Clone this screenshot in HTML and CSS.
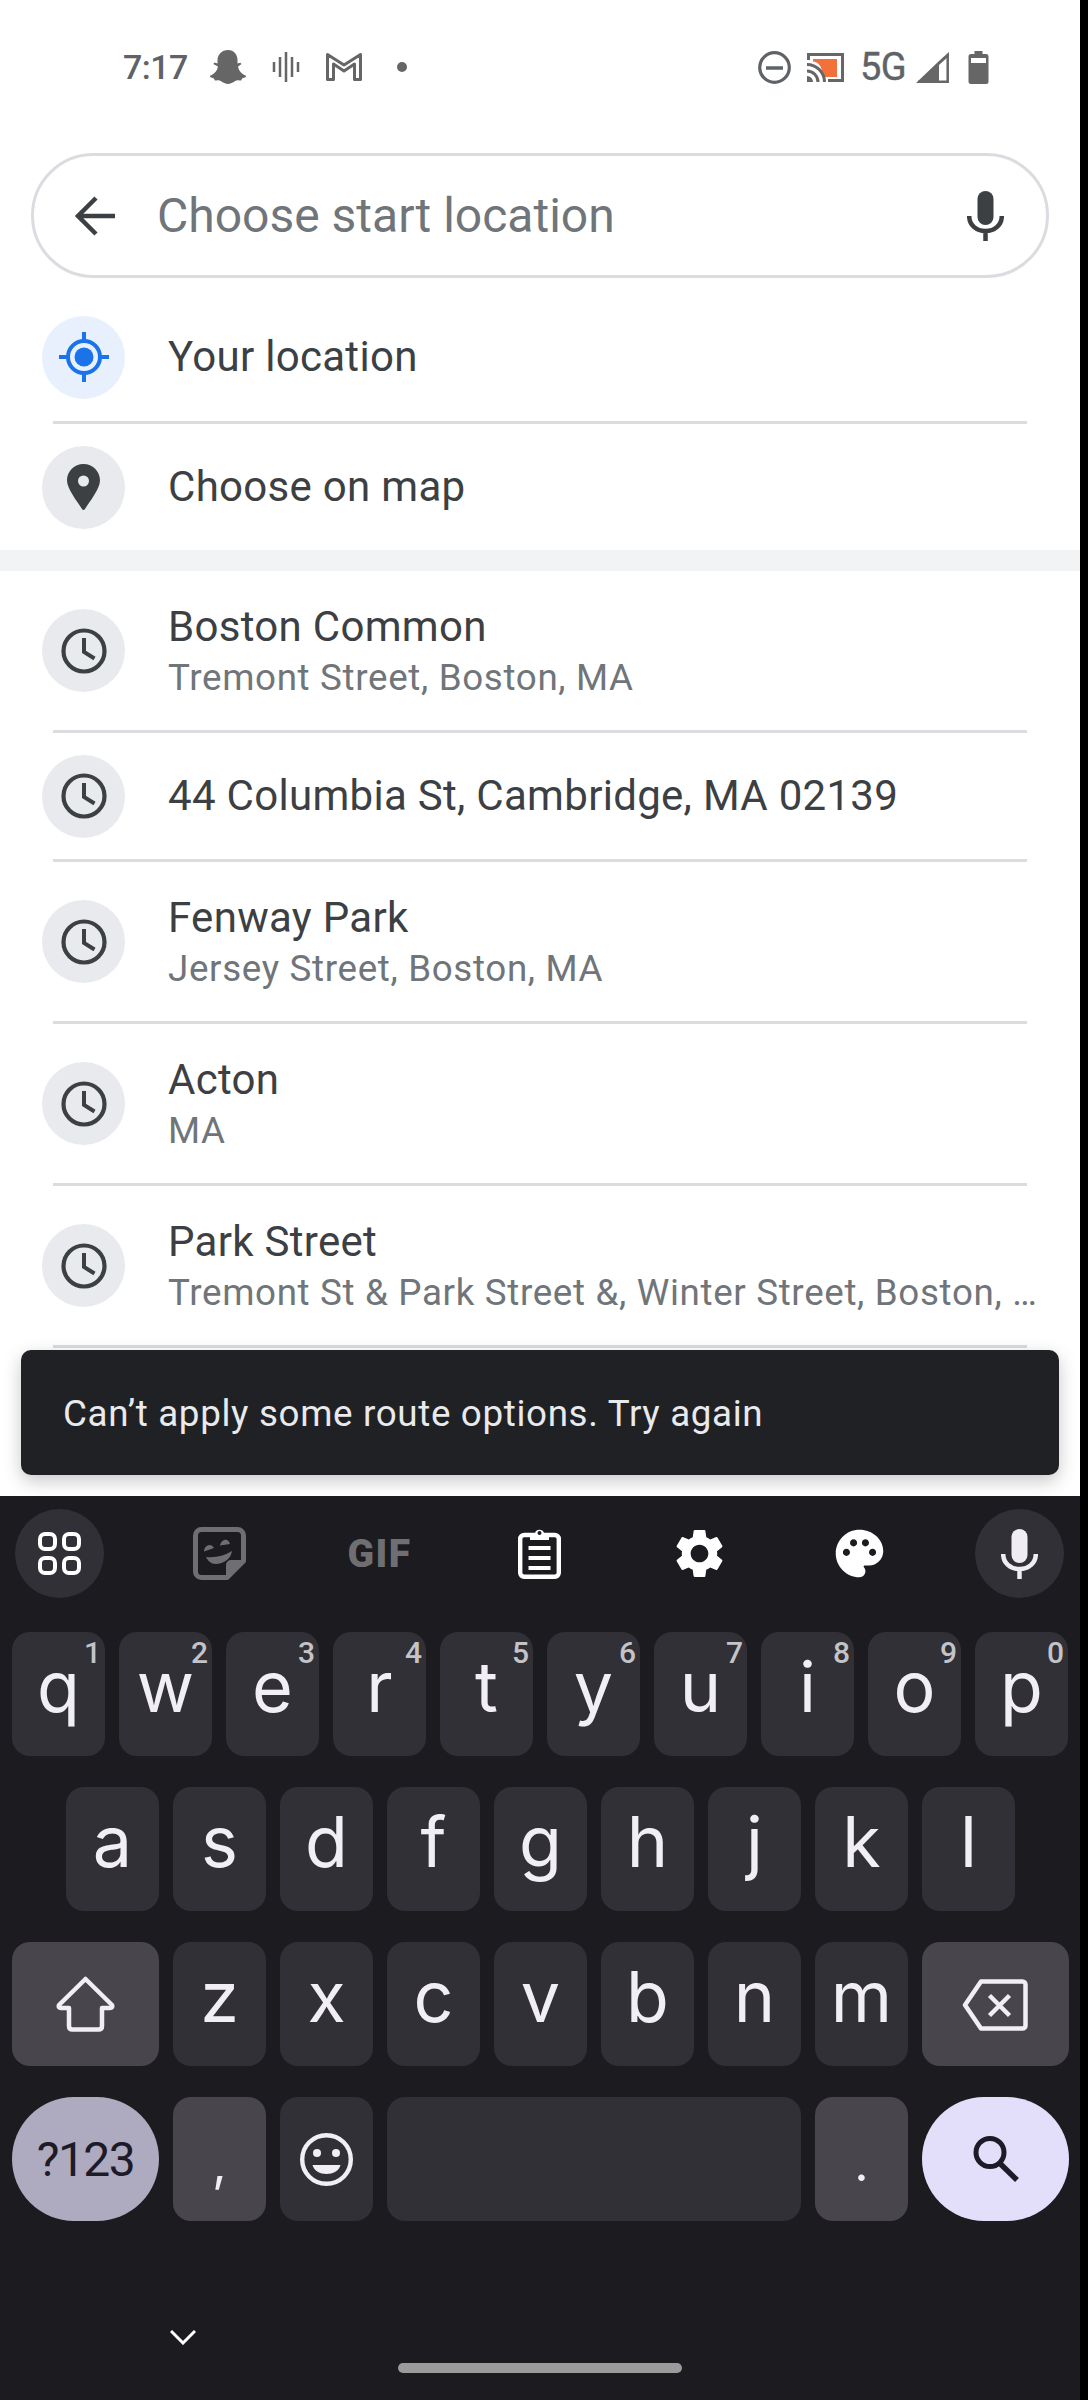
FILE: index.html
```html
<!DOCTYPE html>
<html lang="en">
<head>
    <meta charset="UTF-8">
    <meta name="viewport" content="width=device-width, initial-scale=1.0">
    <title>Choose start location</title>
    <link rel="stylesheet" href="styles.css">
</head>
<body>
<div class="screen">
    <div class="status">
        <div class="status-left">
            <span class="time">7:17</span>
            <svg class="ic-ghost" width="36" height="34" viewBox="0 0 36 34"><path fill="#666" d="M18 0c6 0 9.500 4.600 9.500 10v3.500l2.800-.8 1.200 1.400-3.400 2.400c.6 4 3.400 7.600 7.600 9.100l.3 1.400-4 1.400-.8 2.200-4-.3c-2.400.4-4.800 3.600-9.200 3.600s-6.800-3.200-9.200-3.600l-4 .3-.8-2.200-4-1.400.3-1.400c4.200-1.500 7-5.100 7.600-9.100L3.300 14l1.200-1.400 3 .8V10C7.500 4.600 12 0 18 0z"/></svg>
            <svg class="ic-wave" width="28" height="30" viewBox="0 0 28 30"><path stroke="#666" stroke-width="2.500" d="M2 10v10M8 5v20M14 0v30M20 5v20M26 10v10"/></svg>
            <svg class="ic-gmail" width="36" height="28" viewBox="0 0 36 28"><path fill="none" stroke="#666" stroke-width="3" stroke-linejoin="round" d="M1.500 26.500V1.500L18 12 34.500 1.500v25h-6V11L18 18 7.500 11v15.500z"/></svg>
            <span class="status-dot"></span>
        </div>
        <div class="status-right">
            <svg width="33" height="33" viewBox="0 0 33 33"><circle cx="16.500" cy="16.500" r="14.800" fill="none" stroke="#5f6368" stroke-width="3.200"/><path stroke="#5f6368" stroke-width="3.500" d="M8 17h17"/></svg>
            <svg class="ic-cast" width="37" height="29" viewBox="0 0 37 29"><path fill="#f4703a" d="M6 6h24v18H15.500C15.500 15 13 9.500 6 8.500z"/><path fill="none" stroke="#666" stroke-width="3" d="M1.500 7V1.500h34v26H21"/><path fill="none" stroke="#666" stroke-width="3" d="M0 11.500A17.500 17.500 0 0 1 17.500 29M0 18a11 11 0 0 1 11 11"/><path fill="#666" d="M0 23a6 6 0 0 1 6 6H0z"/></svg>
            <span class="network">5G</span>
            <svg class="ic-signal" width="33" height="31" viewBox="0 0 33 31"><path fill="#666" d="M0 31 23 9v22z"/><path fill="none" stroke="#666" stroke-width="2.500" d="M31.700 3v26.700H2"/><path fill="#666" d="M33 0v4l-10 9V9z"/></svg>
            <svg class="ic-battery" width="21" height="33" viewBox="0 0 21 33"><path fill="#666" d="M6.500 0h8v3h3.500a2.500 2.500 0 0 1 2.500 2.500V30.500a2.500 2.500 0 0 1-2.500 2.500H3a2.500 2.500 0 0 1-2.500-2.500V5.500A2.500 2.500 0 0 1 3 3h3.500z"/><rect x="3" y="7" width="15" height="5" fill="#fff"/></svg>
        </div>
    </div>

    <div class="search">
        <svg class="ic-back" width="42" height="42" viewBox="0 0 42 42"><path fill="none" stroke="#3c4043" stroke-width="4.500" d="M42 21H5M23 3 5 21l18 18"/></svg>
        <span class="search-text">Choose start location</span>
        <svg class="ic-mic" width="37" height="50" viewBox="0 0 37 50"><rect x="10.500" width="16" height="34" rx="8" fill="#3c4043"/><path fill="none" stroke="#3c4043" stroke-width="4.500" d="M2.200 25c0 9 7 15 16.300 15s16.300-6 16.300-15M18.500 39v11"/></svg>
    </div>

    <div class="list list-top">
        <div class="row row-short">
            <div class="badge badge-blue">
                <svg width="50" height="50" viewBox="0 0 50 50"><circle cx="25" cy="25" r="16" fill="none" stroke="#1a73e8" stroke-width="4"/><circle cx="25" cy="25" r="9.500" fill="#1a73e8"/><path stroke="#1a73e8" stroke-width="4" d="M25 0v9M25 41v9M0 25h9M41 25h9"/></svg>
            </div>
            <div class="row-text"><div class="title">Your location</div></div>
        </div>
        <div class="divider"></div>
        <div class="row row-short">
            <div class="badge">
                <svg width="33" height="46" viewBox="0 0 33 46"><path fill="#3c4043" fill-rule="evenodd" d="M16.500 0C7.400 0 0 7.300 0 16.300 0 25 10 37 15 45c.8 1.300 2.200 1.300 3 0 5-8 15-20 15-28.700C33 7.300 25.600 0 16.500 0zm0 11.500a5.500 5.500 0 1 1 0 11 5.500 5.500 0 0 1 0-11z"/></svg>
            </div>
            <div class="row-text"><div class="title">Choose on map</div></div>
        </div>
    </div>

    <div class="band"></div>

    <div class="list">
        <div class="row">
            <div class="badge"><svg class="ic-clock" width="46" height="46" viewBox="0 0 46 46"><circle cx="23" cy="23" r="20.500" fill="none" stroke="#3c4043" stroke-width="4.200"/><path fill="none" stroke="#3c4043" stroke-width="4" d="M23 10v14l10.500 6.500"/></svg></div>
            <div class="row-text"><div class="title">Boston Common</div><div class="sub">Tremont Street, Boston, MA</div></div>
        </div>
        <div class="divider"></div>
        <div class="row row-short">
            <div class="badge"><svg class="ic-clock" width="46" height="46" viewBox="0 0 46 46"><circle cx="23" cy="23" r="20.500" fill="none" stroke="#3c4043" stroke-width="4.200"/><path fill="none" stroke="#3c4043" stroke-width="4" d="M23 10v14l10.500 6.500"/></svg></div>
            <div class="row-text"><div class="title">44 Columbia St, Cambridge, MA 02139</div></div>
        </div>
        <div class="divider"></div>
        <div class="row">
            <div class="badge"><svg class="ic-clock" width="46" height="46" viewBox="0 0 46 46"><circle cx="23" cy="23" r="20.500" fill="none" stroke="#3c4043" stroke-width="4.200"/><path fill="none" stroke="#3c4043" stroke-width="4" d="M23 10v14l10.500 6.500"/></svg></div>
            <div class="row-text"><div class="title">Fenway Park</div><div class="sub">Jersey Street, Boston, MA</div></div>
        </div>
        <div class="divider"></div>
        <div class="row">
            <div class="badge"><svg class="ic-clock" width="46" height="46" viewBox="0 0 46 46"><circle cx="23" cy="23" r="20.500" fill="none" stroke="#3c4043" stroke-width="4.200"/><path fill="none" stroke="#3c4043" stroke-width="4" d="M23 10v14l10.500 6.500"/></svg></div>
            <div class="row-text"><div class="title">Acton</div><div class="sub">MA</div></div>
        </div>
        <div class="divider"></div>
        <div class="row">
            <div class="badge"><svg class="ic-clock" width="46" height="46" viewBox="0 0 46 46"><circle cx="23" cy="23" r="20.500" fill="none" stroke="#3c4043" stroke-width="4.200"/><path fill="none" stroke="#3c4043" stroke-width="4" d="M23 10v14l10.500 6.500"/></svg></div>
            <div class="row-text"><div class="title">Park Street</div><div class="sub">Tremont St &amp; Park Street &amp;, Winter Street, Boston, …</div></div>
        </div>
        <div class="divider"></div>
    </div>

    <div class="snackbar">Can’t apply some route options. Try again</div>

    <div class="keyboard">
        <div class="tools">
            <div class="tool tool-round">
                <svg width="43" height="43" viewBox="0 0 43 43"><g fill="none" stroke="#fff" stroke-width="4"><rect x="2" y="2" width="15" height="15" rx="5"/><rect x="26" y="2" width="15" height="15" rx="5"/><rect x="2" y="26" width="15" height="15" rx="5"/><rect x="26" y="26" width="15" height="15" rx="5"/></g></svg>
            </div>
            <div class="tool">
                <svg width="53" height="53" viewBox="0 0 53 53"><path fill="none" stroke="#6f6f73" stroke-width="5" stroke-linejoin="round" d="M8.500 2.500h36a6 6 0 0 1 6 6V34L34 50.500H8.500a6 6 0 0 1-6-6v-36a6 6 0 0 1 6-6z"/><path fill="#6f6f73" d="M50.500 33H38a5 5 0 0 0-5 5v12.500zM11 24.500c0-6 7-9.500 10-3.500zM27 18.500c1-6 8-8.500 10-1.500zM13 30c9 1 18-1 26-6-1 8-9 13-16 13-5 0-8-3-10-7z"/></svg>
            </div>
            <div class="tool"><span class="gif">GIF</span></div>
            <div class="tool">
                <svg width="43" height="51" viewBox="0 0 43 51"><rect x="2.200" y="7" width="38.600" height="41.800" rx="4" fill="none" stroke="#fff" stroke-width="4.400"/><path fill="#fff" d="M12 5h5a4.800 4.800 0 0 1 9 0h5v7H12z"/><circle cx="21.500" cy="5" r="2" fill="#1c1b20"/><path stroke="#fff" stroke-width="4" d="M10.500 20h22M10.500 30h22M10.500 40h22"/></svg>
            </div>
            <div class="tool">
                <svg width="59" height="59" viewBox="0 0 24 24"><path fill="#fff" d="M19.140 12.940c.04-.3.06-.61.06-.94 0-.32-.02-.64-.07-.94l2.030-1.580c.18-.14.23-.41.12-.61l-1.920-3.320c-.12-.22-.37-.29-.59-.22l-2.390.96c-.5-.38-1.030-.7-1.620-.94l-.36-2.540c-.04-.24-.24-.41-.48-.41h-3.840c-.24 0-.43.17-.47.41l-.36 2.540c-.59.24-1.130.57-1.620.94l-2.390-.96c-.22-.08-.47 0-.59.22L2.740 8.870c-.12.21-.08.47.12.61l2.030 1.580c-.05.3-.09.63-.09.94s.02.64.07.94l-2.030 1.580c-.18.14-.23.41-.12.61l1.920 3.320c.12.22.37.29.59.22l2.390-.96c.5.38 1.030.7 1.620.94l.36 2.540c.05.24.24.41.48.41h3.840c.24 0 .44-.17.47-.41l.36-2.540c.59-.24 1.130-.56 1.620-.94l2.390.96c.22.08.47 0 .59-.22l1.920-3.320c.12-.22.07-.47-.12-.61l-2.010-1.580zM12 15.600c-1.980 0-3.600-1.620-3.600-3.600s1.620-3.600 3.600-3.600 3.600 1.620 3.600 3.600-1.620 3.600-3.600 3.600z"/></svg>
            </div>
            <div class="tool">
                <svg width="57" height="57" viewBox="0 0 24 24"><path fill="#fff" d="M12 2C6.490 2 2 6.490 2 12s4.490 10 10 10c1.380 0 2.500-1.120 2.500-2.500 0-.61-.23-1.200-.64-1.670-.08-.1-.13-.21-.13-.33 0-.28.22-.5.5-.5H16c3.310 0 6-2.690 6-6 0-4.960-4.490-9-10-9zm-5.500 11c-.83 0-1.500-.67-1.500-1.500S5.670 10 6.500 10 8 10.670 8 11.500 7.330 13 6.500 13zm3-4C8.670 9 8 8.330 8 7.500S8.670 6 9.500 6s1.500.67 1.500 1.500S10.330 9 9.500 9zm5 0c-.83 0-1.500-.67-1.500-1.500S13.670 6 14.500 6s1.500.67 1.500 1.500S15.330 9 14.500 9zm3 4c-.83 0-1.500-.67-1.500-1.500s.67-1.500 1.500-1.500 1.500.67 1.500 1.500-.67 1.500-1.500 1.500z"/></svg>
            </div>
            <div class="tool tool-round">
                <svg width="37" height="50" viewBox="0 0 37 50"><rect x="10.500" width="16" height="34" rx="8" fill="#efedf3"/><path fill="none" stroke="#efedf3" stroke-width="4.500" d="M2.200 25c0 9 7 15 16.300 15s16.300-6 16.300-15M18.500 39v11"/></svg>
            </div>
        </div>

        <div class="keys">
            <div class="key-row">
                <div class="key">q<span class="hint">1</span></div>
                <div class="key">w<span class="hint">2</span></div>
                <div class="key">e<span class="hint">3</span></div>
                <div class="key">r<span class="hint">4</span></div>
                <div class="key">t<span class="hint">5</span></div>
                <div class="key">y<span class="hint">6</span></div>
                <div class="key">u<span class="hint">7</span></div>
                <div class="key">i<span class="hint">8</span></div>
                <div class="key">o<span class="hint">9</span></div>
                <div class="key">p<span class="hint">0</span></div>
            </div>
            <div class="key-row key-row-home">
                <div class="key">a</div>
                <div class="key">s</div>
                <div class="key">d</div>
                <div class="key">f</div>
                <div class="key">g</div>
                <div class="key">h</div>
                <div class="key">j</div>
                <div class="key">k</div>
                <div class="key">l</div>
            </div>
            <div class="key-row">
                <div class="key key-wide key-mod">
                    <svg width="59" height="56" viewBox="0 0 59 56"><path fill="none" stroke="#f1eff5" stroke-width="4.500" stroke-linejoin="round" d="M29.500 3 56 29q1 3-2 3h-8v18q0 3.500-3.500 3.500h-26Q13 53.500 13 50V32H5q-3 0-2-3z"/></svg>
                </div>
                <div class="key">z</div>
                <div class="key">x</div>
                <div class="key">c</div>
                <div class="key">v</div>
                <div class="key">b</div>
                <div class="key">n</div>
                <div class="key">m</div>
                <div class="key key-wide key-mod">
                    <svg class="ic-backspace" width="66" height="52" viewBox="0 0 66 52"><path fill="none" stroke="#f1eff5" stroke-width="4.500" stroke-linejoin="round" d="M19 2.500h41.500a3 3 0 0 1 3 3v41a3 3 0 0 1-3 3H19L3 26z"/><path stroke="#f1eff5" stroke-width="4.500" d="M27.500 16.500l20 20M47.500 16.500l-20 20"/></svg>
                </div>
            </div>
            <div class="key-row">
                <div class="key key-wide key-pill key-symbols">?123</div>
                <div class="key key-mod key-punct">,</div>
                <div class="key">
                    <svg width="53" height="53" viewBox="0 0 53 53"><circle cx="26.500" cy="26.500" r="24.300" fill="none" stroke="#f1eff5" stroke-width="4.400"/><circle cx="17" cy="20" r="4" fill="#f1eff5"/><circle cx="36" cy="20" r="4" fill="#f1eff5"/><path fill="#f1eff5" d="M12.500 32h28c-1.500 6-7.500 9-14 9s-12.500-3-14-9z"/></svg>
                </div>
                <div class="key key-space"></div>
                <div class="key key-mod key-punct">.</div>
                <div class="key key-wide key-pill key-action">
                    <svg width="46" height="46" viewBox="0 0 46 46"><circle cx="17" cy="16.500" r="14" fill="none" stroke="#1c1b27" stroke-width="5"/><path stroke="#1c1b27" stroke-width="5.500" d="M26.500 27 44 44"/></svg>
                </div>
            </div>
        </div>

        <div class="nav">
            <svg class="ic-chevron" width="26" height="15" viewBox="0 0 26 15"><path fill="none" stroke="#fff" stroke-width="3" d="M1 1l12 12L25 1"/></svg>
            <div class="home-pill"></div>
        </div>
    </div>
</div>
</body>
</html>
```

FILE: styles.css
```css
* {
    box-sizing: border-box;
}
body {
    margin: 0;
    background: #000;
    font-family: Roboto, "Liberation Sans", sans-serif;
}
svg {
    display: block;
    flex: none;
}
.screen {
    position: relative;
    display: flex;
    flex-direction: column;
    width: 1080px;
    height: 2400px;
    background: #fff;
    overflow: hidden;
}

/* status bar */
.status {
    display: flex;
    justify-content: space-between;
    align-items: center;
    height: 134px;
    margin-bottom: 19px;
    padding: 0 91px 0 123px;
    color: #5f6368;
}
.status-left,
.status-right {
    display: flex;
    align-items: center;
}
.time {
    width: 63px;
    font-size: 34px;
    font-weight: 500;
    letter-spacing: -0.5px;
    white-space: nowrap;
}
.ic-ghost {
    margin-left: 24px;
}
.ic-wave,
.ic-gmail {
    margin-left: 26px;
}
.status-dot {
    width: 10px;
    height: 10px;
    margin-left: 35px;
    border-radius: 50%;
    background: #666;
}
.ic-cast {
    margin-left: 16px;
}
.network {
    width: 46px;
    margin-left: 16px;
    font-size: 38px;
    line-height: 34px;
    letter-spacing: -0.5px;
    -webkit-text-stroke: 0.4px #5f6368;
    white-space: nowrap;
}
.ic-signal {
    margin-left: 10px;
}
.ic-battery {
    margin-left: 19px;
}

/* search box */
.search {
    display: flex;
    align-items: center;
    height: 125px;
    margin: 0 31px;
    padding: 0 42px 0 39px;
    border: 3px solid #dadce0;
    border-radius: 63px;
}
.search-text {
    flex: 1;
    margin-left: 42px;
    font-size: 48px;
    color: #70757a;
}

/* results */
.list-top {
    padding-top: 15px;
}
.row {
    display: flex;
    align-items: center;
    gap: 43px;
    height: 159px;
    padding-left: 42px;
}
.row-short {
    height: 126px;
}
.list-top .row-short:first-child {
    height: 128px;
}
.badge {
    display: flex;
    justify-content: center;
    align-items: center;
    flex: none;
    width: 83px;
    height: 83px;
    border-radius: 50%;
    background: #e8eaed;
}
.badge-blue {
    background: #e8f0fe;
}
.row-text {
    min-width: 0;
}
.title {
    font-size: 42px;
    line-height: 54px;
    letter-spacing: 0.3px;
    color: #3c4043;
    white-space: nowrap;
}
.sub {
    font-size: 36.75px;
    line-height: 48px;
    letter-spacing: 0.66px;
    color: #70757a;
    white-space: nowrap;
}
.divider {
    height: 3px;
    margin: 0 53px;
    background: #dadce0;
}
.band {
    height: 21px;
    background: #f1f3f4;
}

/* snackbar sits over the list */
.snackbar {
    position: absolute;
    left: 21px;
    top: 1350px;
    display: flex;
    align-items: center;
    width: 1038px;
    height: 125px;
    padding: 2px 0 0 42px;
    border-radius: 10px;
    background: #202124;
    box-shadow: 0 6px 18px rgba(0, 0, 0, 0.22);
    font-size: 36.75px;
    letter-spacing: 0.66px;
    color: #e8eaed;
}

/* keyboard */
.keyboard {
    margin-top: auto;
    padding-top: 13px;
    background: #1c1b20;
}
.tools {
    display: flex;
    justify-content: space-between;
    margin-bottom: 34px;
    padding: 0 16px 0 15px;
}
.tool {
    display: flex;
    justify-content: center;
    align-items: center;
    width: 89px;
    height: 89px;
}
.tool-round {
    border-radius: 50%;
    background: #313036;
}
.gif {
    font-size: 39px;
    font-weight: 900;
    letter-spacing: 1.5px;
    color: #6f6f73;
}
.keys {
    display: flex;
    flex-direction: column;
    gap: 31px;
    padding: 0 12px;
}
.key-row {
    display: flex;
    gap: 14px;
    height: 124px;
}
.key-row-home {
    padding-left: 54px;
}
.key {
    position: relative;
    display: flex;
    justify-content: center;
    align-items: center;
    flex: none;
    width: 93px;
    border-radius: 18px;
    background: #313036;
    font-family: Inter, Roboto, sans-serif;
    font-size: 70px;
    line-height: 109px;
    padding-bottom: 15px;
    color: #f1eff5;
}
.key svg {
    margin-top: 15px;
}
.key-wide {
    width: 147px;
}
.key-mod {
    background: #48464c;
}
.key-pill {
    border-radius: 62px;
}
.key-symbols {
    background: #aeaabf;
    font-family: Roboto, sans-serif;
    font-size: 48px;
    letter-spacing: -1.5px;
    padding-bottom: 0;
    color: #1c1b27;
}
.key-action {
    background: #e3dffb;
}
.key-space {
    width: 414px;
}
.key-punct {
    align-items: flex-start;
    padding-bottom: 0;
    font-size: 50px;
    line-height: 132px;
}
.ic-backspace {
    margin-right: 2px;
}
.key-mod .ic-backspace {
    margin-top: 17px;
}
.hint {
    position: absolute;
    top: 3px;
    right: 4px;
    font-family: Roboto, sans-serif;
    font-size: 30px;
    line-height: 36px;
    font-weight: 500;
    color: #c4c3c8;
}
.nav {
    display: flex;
    justify-content: space-between;
    height: 70px;
    margin-top: 109px;
    padding: 0 398px 27px 170px;
}
.ic-chevron {
    margin-right: 202px;
}
.home-pill {
    flex: none;
    width: 284px;
    height: 10px;
    margin-top: 33px;
    border-radius: 5px;
    background: #9b9b9b;
}
```
